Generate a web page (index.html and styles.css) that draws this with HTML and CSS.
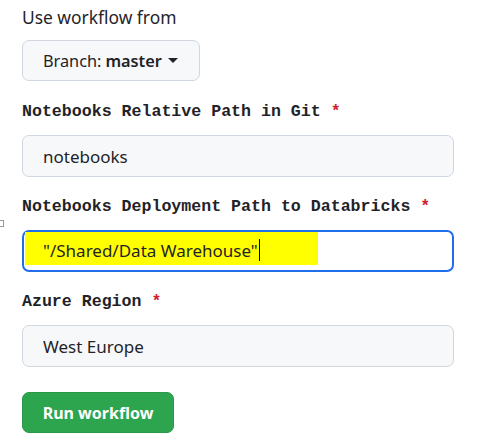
FILE: index.html
```html
<!DOCTYPE html>
<html>
<head>
<meta charset="utf-8">
<link rel="stylesheet" href="styles.css">
</head>
<body>
<div class="panel">
  <div class="heading">Use workflow from</div>
  <button class="branch">Branch: <b>master</b> <span class="caret"></span></button>

  <div class="field first">
    <div class="label">Notebooks Relative Path in Git <span class="req">*</span></div>
    <div class="input">notebooks</div>
  </div>

  <div class="field">
    <div class="label">Notebooks Deployment Path to Databricks <span class="req">*</span></div>
    <div class="input focus">
      <span class="mark"></span>
      <span class="value">"/Shared/Data Warehouse"</span><span class="cursor"></span>
    </div>
  </div>

  <div class="field">
    <div class="label">Azure Region <span class="req">*</span></div>
    <div class="input">West Europe</div>
  </div>

  <button class="run">Run workflow</button>
  <span class="stray"></span>
</div>
</body>
</html>
```

FILE: styles.css
```css
html, body {
  margin: 0;
  padding: 0;
  background: #ffffff;
}
.panel {
  position: relative;
  display: flex;
  flex-direction: column;
  align-items: flex-start;
  padding: 5px 24px 0 22px;
  font-family: "Noto Sans", "Open Sans", sans-serif;
  color: #1f2328;
}
.heading {
  font-size: 17.4px;
  line-height: 24px;
  height: 24px;
}
.branch {
  margin-top: 11px;
  box-sizing: border-box;
  width: 178px;
  height: 41px;
  border: 1px solid #d0d7de;
  border-radius: 7px;
  background: #f6f8fa;
  font-family: inherit;
  font-size: 16.3px;
  color: #1f2328;
  display: flex;
  align-items: center;
  padding: 0 0 0 20px;
}
.branch b {
  font-weight: 600;
  margin-left: 4px;
}
.caret {
  display: inline-block;
  width: 0;
  height: 0;
  margin-left: 6px;
  border-left: 5px solid transparent;
  border-right: 5px solid transparent;
  border-top: 5px solid #1f2328;
}
.field {
  margin-top: 18px;
  display: flex;
  flex-direction: column;
  width: 432px;
}
.field.first {
  margin-top: 19px;
}
.label {
  font-family: "Liberation Mono", "DejaVu Sans Mono", monospace;
  font-weight: bold;
  font-size: 16.6px;
  line-height: 24px;
  height: 24px;
  color: #1f2328;
  white-space: nowrap;
}
.req {
  color: #cf222e;
}
.input {
  position: relative;
  margin-top: 11px;
  box-sizing: border-box;
  height: 42px;
  border: 1px solid #d0d7de;
  border-radius: 7px;
  background: #f6f8fa;
  font-size: 17px;
  color: #1f2328;
  display: flex;
  align-items: center;
  padding-left: 20px;
}
.input.focus {
  background: #ffffff;
  border: 2px solid #1f6feb;
  padding-left: 19px;
}
.mark {
  position: absolute;
  left: 1px;
  top: 0;
  width: 293px;
  height: 33px;
  background: #ffff00;
}
.value {
  position: relative;
  margin-top: -2px;
}
.cursor {
  position: relative;
  display: inline-block;
  width: 1px;
  height: 22px;
  margin-top: -3px;
  margin-left: 1px;
  background: #000000;
}
.run {
  margin-top: 25px;
  box-sizing: border-box;
  width: 152px;
  height: 41px;
  border: 1px solid #2a9947;
  border-radius: 7px;
  background: #2da44e;
  color: #ffffff;
  font-family: inherit;
  font-weight: 700;
  font-size: 16px;
  padding: 0;
}
.stray {
  position: absolute;
  left: -2px;
  top: 220px;
  width: 4px;
  height: 5px;
  border: 1px solid #9a9a9a;
}
```
